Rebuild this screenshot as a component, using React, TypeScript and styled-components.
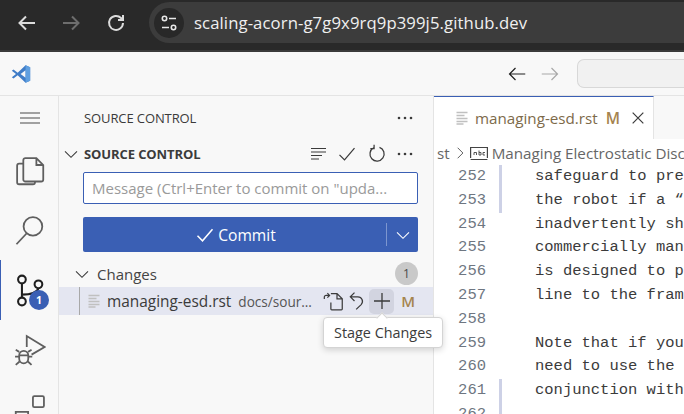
import React from 'react'
import styled, { createGlobalStyle } from 'styled-components'

const GlobalStyle = createGlobalStyle`
  html, body {
    margin: 0;
    padding: 0;
    background: #f8f8f8;
  }
  * {
    box-sizing: border-box;
  }
`

const Page = styled.div`
  position: relative;
  display: flex;
  flex-direction: column;
  width: 684px;
  height: 414px;
  overflow: hidden;
  font-family: 'Open Sans', 'Noto Sans', sans-serif;
  color: #3b3b3b;
`

/* browser chrome */
const BrowserBar = styled.div`
  display: flex;
  align-items: center;
  flex: 0 0 52px;
  height: 52px;
  padding: 0 0 5px 15px;
  background: #292929;
  border-bottom: 2px solid #3b3b3b;
`

const NavButton = styled.div<{ $gap: number }>`
  display: flex;
  width: 24px;
  height: 24px;
  margin-right: ${({ $gap }) => $gap}px;
`

const AddressPill = styled.div`
  display: flex;
  align-items: center;
  flex: 1;
  height: 41px;
  padding-left: 5px;
  background: #3c3c3c;
  border-radius: 21px 0 0 21px;
`

const SiteInfo = styled.div`
  display: flex;
  align-items: center;
  justify-content: center;
  width: 30px;
  height: 30px;
  border-radius: 50%;
  background: #282828;
`

const Url = styled.div`
  margin-left: 10px;
  font-size: 16.7px;
  letter-spacing: 0.1px;
  color: #f0f0f0;
`

/* vscode title bar */
const TitleBar = styled.div`
  display: flex;
  align-items: center;
  flex: 0 0 44px;
  padding-left: 11px;
  background: #f8f8f8;
  border-bottom: 1px solid #e4e4e4;
`

const TitleNav = styled.div`
  display: flex;
  align-items: center;
  gap: 15px;
  margin-left: 477px;
`

const CommandCenter = styled.div`
  width: 107px;
  height: 29px;
  margin-left: 18px;
  background: #f1f1f1;
  border: 1px solid #d8d8d8;
  border-right: 0;
  border-radius: 7px 0 0 7px;
`

const Workbench = styled.div`
  display: flex;
  flex: 1;
  min-height: 0;
`

/* activity bar */
const ActivityBar = styled.div`
  display: flex;
  flex-direction: column;
  align-items: center;
  flex: 0 0 59px;
  background: #f8f8f8;
  border-right: 1px solid #e4e4e4;
`

const Activity = styled.div<{ $active?: boolean; $height: number }>`
  position: relative;
  display: flex;
  flex: 0 0 ${({ $height }) => $height}px;
  align-items: center;
  justify-content: center;
  width: 100%;
  border-left: 1px solid ${({ $active }) => ($active ? '#3a5fb4' : 'transparent')};
`

const ActivityBadge = styled.div`
  position: absolute;
  left: 28px;
  top: 30px;
  width: 20px;
  height: 20px;
  border-radius: 50%;
  background: #3a5fb4;
  color: #fff;
  font-size: 10.5px;
  font-weight: 700;
  line-height: 20px;
  text-align: center;
`

/* sidebar */
const Sidebar = styled.div`
  display: flex;
  flex-direction: column;
  flex: 0 0 375px;
  background: #f8f8f8;
  border-right: 1px solid #e4e4e4;
`

const SidebarHead = styled.div`
  display: flex;
  align-items: center;
  justify-content: space-between;
  height: 44px;
  padding: 0 20px 0 25px;
  font-size: 13px;
  letter-spacing: -0.1px;
  color: #3b3b3b;
`

const SectionHead = styled.div`
  display: flex;
  align-items: center;
  height: 27px;
  padding: 0 20px 0 4px;
  font-size: 13px;
  font-weight: 700;
  letter-spacing: -0.1px;
  color: #3b3b3b;
`

const SectionTitle = styled.span`
  margin-left: 5px;
  flex: 1;
`

const SectionTools = styled.div`
  display: flex;
  align-items: center;
  gap: 10px;
`

const MessageBox = styled.div`
  display: flex;
  align-items: center;
  height: 32px;
  margin: 5px 15px 0 24px;
  padding-left: 8px;
  background: #fff;
  border: 1px solid #3a5fb4;
  border-radius: 2px;
  font-size: 15px;
  color: #9a9a9a;
  white-space: nowrap;
  overflow: hidden;
`

const CommitButton = styled.div`
  display: flex;
  align-items: center;
  height: 35px;
  margin: 13px 15px 0 24px;
  background: #3a5fb4;
  border-radius: 2px;
  color: #fff;
  font-size: 15.6px;
`

const CommitLabel = styled.div`
  display: flex;
  align-items: center;
  justify-content: center;
  gap: 3px;
  flex: 1;
  padding: 1px 0 0 2px;
`

const CommitSplit = styled.div`
  width: 1px;
  height: 23px;
  background: #7d96cf;
`

const CommitCaret = styled.div`
  display: flex;
  align-items: center;
  justify-content: center;
  width: 31px;
`

const ChangesHead = styled.div`
  display: flex;
  align-items: center;
  height: 27px;
  margin-top: 8px;
  padding: 0 15px 0 15px;
  font-size: 15px;
  color: #444;
`

const ChangesTitle = styled.span`
  margin-left: 7px;
  flex: 1;
`

const CountBadge = styled.div`
  width: 23px;
  height: 23px;
  border-radius: 50%;
  background: #c9c9c9;
  font-size: 12px;
  line-height: 23px;
  text-align: center;
  color: #4a4a4a;
`

const FileRow = styled.div`
  display: flex;
  align-items: center;
  height: 28px;
  background: #e4e6f1;
  font-size: 15.4px;
  white-space: nowrap;
`

const TreeGuide = styled.div`
  align-self: stretch;
  width: 1px;
  margin-left: 20px;
  background: #a8a8a8;
`

const FileIcon = styled.div`
  display: flex;
  margin-left: 6px;
`

const FileName = styled.span`
  margin-left: 5px;
  color: #3b3b3b;
`

const FilePath = styled.span`
  margin-left: 7px;
  width: 76px;
  font-size: 13.6px;
  overflow: hidden;
  text-overflow: ellipsis;
  color: #555;
`

const RowTools = styled.div`
  display: flex;
  align-items: center;
  margin-left: 7px;
`

const RowTool = styled.div<{ $hover?: boolean }>`
  display: flex;
  align-items: center;
  justify-content: center;
  width: ${({ $hover }) => ($hover ? 25 : 24)}px;
  height: 25px;
  border-radius: 5px;
  background: ${({ $hover }) => ($hover ? '#d2d4e0' : 'transparent')};
`

const ModifiedMark = styled.span<{ $size: number }>`
  color: #a5844e;
  font-size: ${({ $size }) => $size}px;
  font-weight: 600;
`

const RowMark = styled(ModifiedMark)`
  margin-left: 7px;
`

const Tooltip = styled.div`
  position: absolute;
  left: 323px;
  top: 317px;
  display: flex;
  align-items: center;
  height: 31px;
  padding: 0 10px;
  background: #fff;
  border: 1px solid #d4d4d4;
  border-radius: 4px;
  box-shadow: 0 2px 6px rgba(0, 0, 0, 0.16);
  font-size: 14.4px;
  color: #3b3b3b;
  white-space: nowrap;

  &::before {
    content: '';
    position: absolute;
    left: 54px;
    top: -4px;
    width: 7px;
    height: 7px;
    background: #fff;
    border-left: 1px solid #d4d4d4;
    border-top: 1px solid #d4d4d4;
    transform: rotate(45deg);
  }
`

/* editor */
const Editor = styled.div`
  display: flex;
  flex-direction: column;
  flex: 1;
  min-width: 0;
  background: #fff;
`

const TabStrip = styled.div`
  display: flex;
  flex: 0 0 43px;
  background: #f8f8f8;
`

const Tab = styled.div`
  display: flex;
  align-items: center;
  width: 220px;
  padding-left: 20px;
  background: #fff;
  border-top: 1px solid #3a5fb4;
  border-right: 1px solid #e4e4e4;
  font-size: 15.2px;
  color: #7d6a4a;
  white-space: nowrap;
`

const TabName = styled.span`
  margin-left: 5px;
`

const TabMark = styled(ModifiedMark)`
  margin-left: 8px;
`

const TabClose = styled.div`
  display: flex;
  margin-left: 10px;
`

const Breadcrumbs = styled.div`
  display: flex;
  align-items: center;
  flex: 0 0 26px;
  padding: 2px 0 0 3px;
  font-size: 15.2px;
  color: #666;
  white-space: nowrap;
  overflow: hidden;
`

const CrumbIcon = styled.div`
  display: flex;
  margin: 0 4px 0 3px;
`

const CrumbSep = styled.div`
  display: flex;
  margin-left: 3px;
`

const Code = styled.div`
  flex: 1;
  overflow: hidden;
  font-family: 'Liberation Mono', monospace;
  font-size: 15.5px;
  color: #3b3b3b;
`

const CodeLine = styled.div`
  display: flex;
  height: 23.8px;
  line-height: 23.8px;
  white-space: pre;
`

const LineNo = styled.span`
  flex: 0 0 52px;
  text-align: right;
  color: #6e7681;
`

const Gutter = styled.span<{ $changed?: boolean }>`
  flex: 0 0 3px;
  margin-left: 13px;
  background: ${({ $changed }) => ($changed ? '#cdd1e6' : 'transparent')};
`

const CodeText = styled.span`
  margin-left: 33px;
`

const lines: { n: number; text: string; changed?: boolean }[] = [
  { n: 252, text: 'safeguard to pre', changed: true },
  { n: 253, text: 'the robot if a “', changed: true },
  { n: 254, text: 'inadvertently sh' },
  { n: 255, text: 'commercially man' },
  { n: 256, text: 'is designed to p' },
  { n: 257, text: 'line to the fram' },
  { n: 258, text: '' },
  { n: 259, text: 'Note that if you' },
  { n: 260, text: 'need to use the' },
  { n: 261, text: 'conjunction with', changed: true },
  { n: 262, text: '', changed: true },
]

const Stroke = ({ size, color = '#3b3b3b', width = 1.2, children }: { size: number; color?: string; width?: number; children: React.ReactNode }) => (
  <svg width={size} height={size} viewBox="0 0 24 24" fill="none" stroke={color} strokeWidth={width}>
    {children}
  </svg>
)

const Lines = () => (
  <svg width="16" height="16" viewBox="0 0 16 16" fill="none" stroke="#c0c0c0" strokeWidth="1.5">
    <path d="M2.500 2.500h11M2.500 5.500h8M2.500 8.500h11M2.500 11.500h11M2.500 14h7" />
  </svg>
)

const Chevron = ({ color = '#3b3b3b' }: { color?: string }) => (
  <Stroke size={16} color={color} width={1.6}>
    <path d="M3 8l9 9 9-9" />
  </Stroke>
)

const Dots = () => (
  <svg width="16" height="4" viewBox="0 0 16 4" fill="#3b3b3b">
    <circle cx="2" cy="2" r="1.300" />
    <circle cx="8" cy="2" r="1.300" />
    <circle cx="14" cy="2" r="1.300" />
  </svg>
)

export default function App() {
  return (
    <Page>
      <GlobalStyle />
      <BrowserBar>
        <NavButton $gap={20}>
          <Stroke size={24} color="#dcdcdc" width={2}>
            <path d="M20 12H5M11 5.500L4.500 12l6.500 6.500" />
          </Stroke>
        </NavButton>
        <NavButton $gap={21}>
          <Stroke size={24} color="#6d6d6d" width={2}>
            <path d="M4 12h15M13 5.500l6.500 6.500-6.500 6.500" />
          </Stroke>
        </NavButton>
        <NavButton $gap={21}>
          <Stroke size={24} color="#dcdcdc" width={2}>
            <path d="M19 12a7 7 0 1 1-2-5l2 2M19 4v5h-5" />
          </Stroke>
        </NavButton>
        <AddressPill>
          <SiteInfo>
            <svg width="18" height="18" viewBox="0 0 18 18" fill="none" stroke="#e8e8e8" strokeWidth="1.6">
              <circle cx="4.500" cy="4.500" r="2.200" />
              <path d="M9 4.500h7M2 13.500h7" />
              <circle cx="13.500" cy="13.500" r="2.200" />
            </svg>
          </SiteInfo>
          <Url>scaling-acorn-g7g9x9rq9p399j5.github.dev</Url>
        </AddressPill>
      </BrowserBar>

      <TitleBar>
        <svg width="20" height="20" viewBox="0 0 24 24">
          <path d="M17.500 1.500L23 4v16l-5.500 2.500L8 13.500l-5 4-2-1.500 5-4-5-4 2-1.500 5 4z" fill="#3f7cc7" />
          <path d="M17.500 7.500L11.500 12l6 4.500z" fill="#f8f8f8" />
          <path d="M17.500 1.500L23 4v16l-5.500 2.500z" fill="#5f9fe0" />
        </svg>
        <TitleNav>
          <Stroke size={18} color="#1f1f1f" width={1.6}>
            <path d="M23 12H2M10 4l-8 8 8 8" />
          </Stroke>
          <Stroke size={18} color="#a8a8a8" width={1.6}>
            <path d="M1 12h21M14 4l8 8-8 8" />
          </Stroke>
        </TitleNav>
        <CommandCenter />
      </TitleBar>

      <Workbench>
        <ActivityBar>
          <Activity $height={44}>
            <svg width="20" height="12" viewBox="0 0 20 12" stroke="#4a4a4a" strokeWidth="1.100">
              <path d="M0 1h20M0 6h20M0 11h20" />
            </svg>
          </Activity>
          <Activity $height={60}>
            <Stroke size={33} color="#5f5f5f" width={1.300}>
              <path d="M9 3h8l5 5v10.500a1.500 1.500 0 0 1-1.500 1.500H9a1.500 1.500 0 0 1-1.500-1.500v-14A1.500 1.500 0 0 1 9 3zM17 3v5h5" />
              <path d="M7.500 7H4.500A1.500 1.500 0 0 0 3 8.500v12A1.500 1.500 0 0 0 4.500 22h10a1.500 1.500 0 0 0 1.500-1.500V20" />
            </Stroke>
          </Activity>
          <Activity $height={60}>
            <Stroke size={33} color="#5f5f5f" width={1.300}>
              <circle cx="14.500" cy="9" r="6.800" />
              <path d="M10 14L2.500 22" />
            </Stroke>
          </Activity>
          <Activity $active $height={60}>
            <Stroke size={33} color="#1f1f1f" width={1.500}>
              <circle cx="6.500" cy="4" r="2.800" />
              <circle cx="6.500" cy="20" r="2.800" />
              <circle cx="18.500" cy="7.500" r="2.800" />
              <path d="M6.500 7v10M6.500 15c7 0 11-1.500 12-4.500" />
            </Stroke>
            <ActivityBadge>1</ActivityBadge>
          </Activity>
          <Activity $height={60}>
            <Stroke size={33} color="#5f5f5f" width={1.300}>
              <path d="M10 9.500V1.500l13 8-9.500 5.500" />
              <path d="M4.500 15.500a3.300 3.300 0 1 1 6.600 0V18a3.300 3.300 0 1 1-6.600 0z" />
              <path d="M4.500 13L2 11.500M11 13l2.500-1.500M1.500 16.500h3M11 16.500h3M4.800 20L2 22.500M10.800 20l2.700 2.500M4.500 15.500h6.600" />
            </Stroke>
          </Activity>
          <Activity $height={60}>
            <Stroke size={33} color="#5f5f5f" width={1.300}>
              <rect x="14.500" y="1.500" width="8" height="8" rx="1" />
              <path d="M2 13h9v9H2zM2 22h18M11 13v9" />
            </Stroke>
          </Activity>
        </ActivityBar>

        <Sidebar>
          <SidebarHead>
            <span>SOURCE CONTROL</span>
            <Dots />
          </SidebarHead>
          <SectionHead>
            <Chevron />
            <SectionTitle>SOURCE CONTROL</SectionTitle>
            <SectionTools>
              <svg width="16" height="14" viewBox="0 0 16 14" stroke="#3b3b3b" strokeWidth="1.200">
                <path d="M0 1.500h15M0 5h15M0 8.500h11M0 12h8" />
              </svg>
              <Stroke size={20} width={1.500}>
                <path d="M3 13l6 6L21 5" />
              </Stroke>
              <Stroke size={20} width={1.500}>
                <path d="M8 4.500A8.500 8.500 0 1 0 15 4M8.500 1v4.500H4" />
              </Stroke>
              <Dots />
            </SectionTools>
          </SectionHead>
          <MessageBox>Message (Ctrl+Enter to commit on "upda...</MessageBox>
          <CommitButton>
            <CommitLabel>
              <Stroke size={20} color="#fff" width={1.800}>
                <path d="M3 13l6 6L21 5" />
              </Stroke>
              Commit
            </CommitLabel>
            <CommitSplit />
            <CommitCaret>
              <Chevron color="#fff" />
            </CommitCaret>
          </CommitButton>
          <ChangesHead>
            <Chevron />
            <ChangesTitle>Changes</ChangesTitle>
            <CountBadge>1</CountBadge>
          </ChangesHead>
          <FileRow>
            <TreeGuide />
            <FileIcon>
              <Lines />
            </FileIcon>
            <FileName>managing-esd.rst</FileName>
            <FilePath>docs/source/robot</FilePath>
            <RowTools>
              <RowTool>
                <Stroke size={21} width={1.400}>
                  <path d="M9 3h7l6 6v11.500a1 1 0 0 1-1 1H10a1 1 0 0 1-1-1V13M16 3v6h6M1.500 9V7a2 2 0 0 1 2-2H7M5 2.500L7.500 5 5 7.500" />
                </Stroke>
              </RowTool>
              <RowTool>
                <Stroke size={20} width={1.500}>
                  <path d="M9 2L4 7l5 5M4 7h9a5.500 5.500 0 0 1 4 9.300L11 22" />
                </Stroke>
              </RowTool>
              <RowTool $hover>
                <Stroke size={24} width={1.300}>
                  <path d="M12 4v16M4 12h16" />
                </Stroke>
              </RowTool>
            </RowTools>
            <RowMark $size={15}>M</RowMark>
          </FileRow>
        </Sidebar>

        <Editor>
          <TabStrip>
            <Tab>
              <Lines />
              <TabName>managing-esd.rst</TabName>
              <TabMark $size={15.5}>M</TabMark>
              <TabClose>
                <Stroke size={16} color="#3b3b3b" width={1.800}>
                  <path d="M4 4l16 16M20 4L4 20" />
                </Stroke>
              </TabClose>
            </Tab>
          </TabStrip>
          <Breadcrumbs>
            st
            <CrumbSep>
              <Stroke size={14} color="#555" width={1.600}>
                <path d="M8 3l9 9-9 9" />
              </Stroke>
            </CrumbSep>
            <CrumbIcon>
              <svg width="18" height="15" viewBox="0 0 18 15" fill="none" stroke="#444" strokeWidth="1.200">
                <path d="M.600 12V1.500h16.800V12M.600 13.500h16.800" />
                <path d="M4 9V6.500h2.500V9M9 4.500V9h2V6.500H9M15 6.500h-2V9h2" strokeWidth=".9" />
              </svg>
            </CrumbIcon>
            Managing Electrostatic Disc
          </Breadcrumbs>
          <Code>
            {lines.map(line => (
              <CodeLine key={line.n}>
                <LineNo>{line.n}</LineNo>
                <Gutter $changed={line.changed} />
                <CodeText>{line.text}</CodeText>
              </CodeLine>
            ))}
          </Code>
        </Editor>
      </Workbench>

      <Tooltip>Stage Changes</Tooltip>
    </Page>
  )
}
